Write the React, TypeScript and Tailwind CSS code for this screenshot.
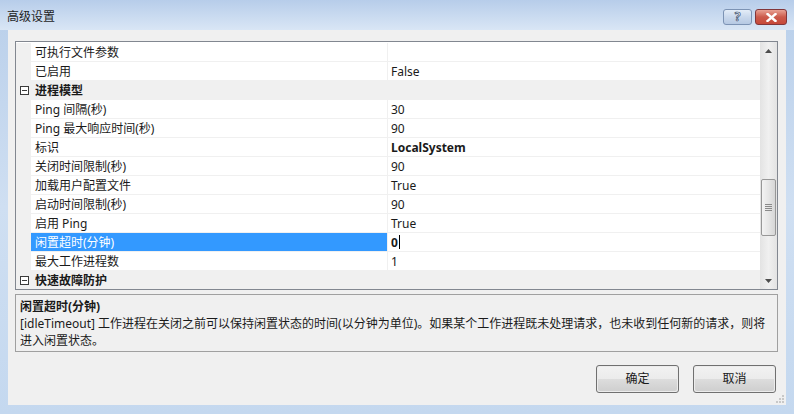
import React from 'react';

type Row =
    | { kind: 'prop'; name: string; value: string; bold?: boolean; selected?: boolean }
    | { kind: 'cat'; name: string };

const ROWS: Row[] = [
    { kind: 'prop', name: '可执行文件参数', value: '' },
    { kind: 'prop', name: '已启用', value: 'False' },
    { kind: 'cat', name: '进程模型' },
    { kind: 'prop', name: 'Ping 间隔(秒)', value: '30' },
    { kind: 'prop', name: 'Ping 最大响应时间(秒)', value: '90' },
    { kind: 'prop', name: '标识', value: 'LocalSystem', bold: true },
    { kind: 'prop', name: '关闭时间限制(秒)', value: '90' },
    { kind: 'prop', name: '加载用户配置文件', value: 'True' },
    { kind: 'prop', name: '启动时间限制(秒)', value: '90' },
    { kind: 'prop', name: '启用 Ping', value: 'True' },
    { kind: 'prop', name: '闲置超时(分钟)', value: '0', bold: true, selected: true },
    { kind: 'prop', name: '最大工作进程数', value: '1' },
    { kind: 'cat', name: '快速故障防护' },
];

function Collapse() {
    return (
        <span className="relative w-[9px] h-[9px] border border-[#3c3c3c] bg-white shrink-0">
            <span className="absolute left-[1px] right-[1px] top-[3px] h-[1px] bg-[#3c3c3c]" />
        </span>
    );
}

function GridRow({ row }: { row: Row }) {
    if (row.kind === 'cat') {
        return (
            <div className="flex items-center h-[19px] bg-[#f0f0f0] shrink-0">
                <div className="w-[15px] flex items-center justify-center pl-[2px]">
                    <Collapse />
                </div>
                <div className="pl-[4px] font-bold leading-[19px] text-[#1a1a1a]">{row.name}</div>
            </div>
        );
    }
    return (
        <div className="flex h-[19px] shrink-0">
            <div className="w-[15px] bg-[#f0f0f0]" />
            <div
                className={`w-[357px] pl-[4px] leading-[19px] border-b border-r border-[#f0f0f0] whitespace-nowrap ${
                    row.selected ? 'bg-[#3399ff] text-white' : 'text-[#1a1a1a]'
                }`}
            >
                {row.name}
            </div>
            <div className={`flex-1 flex items-center pl-[3px] leading-[19px] border-b border-[#f0f0f0] text-[#1a1a1a] ${row.bold ? 'font-bold' : ''}`}>
                {row.value}
                {row.selected && <span className="w-[1px] h-[14px] bg-black ml-[1px]" />}
            </div>
        </div>
    );
}

function ScrollBar() {
    return (
        <div className="w-[17px] flex flex-col bg-gradient-to-r from-[#e3e3e3] via-[#f0f0f0] to-[#e3e3e3]">
            <div className="h-[17px] flex items-center justify-center">
                <svg width="7" height="4" viewBox="0 0 7 4"><path d="M0 4 L3.5 0 L7 4 Z" fill="#4d4d4d" /></svg>
            </div>
            <div className="flex-1 relative">
                <div className="absolute left-[1px] right-[1px] top-[120px] h-[57px] rounded-[2px] border border-[#979797] bg-gradient-to-r from-[#f3f3f3] via-[#e6e6e6] to-[#d6d6d6] flex flex-col items-center justify-center gap-[1px]">
                    <span className="w-[7px] h-[1px] bg-[#8a8a8a]" />
                    <span className="w-[7px] h-[1px] bg-[#8a8a8a]" />
                    <span className="w-[7px] h-[1px] bg-[#8a8a8a]" />
                    <span className="w-[7px] h-[1px] bg-[#8a8a8a]" />
                </div>
            </div>
            <div className="h-[17px] flex items-center justify-center">
                <svg width="7" height="4" viewBox="0 0 7 4"><path d="M0 0 L3.5 4 L7 0 Z" fill="#4d4d4d" /></svg>
            </div>
        </div>
    );
}

function Button({ label }: { label: string }) {
    return (
        <div className="w-[83px] h-[28px] rounded-[3px] border border-[#707070] p-[1px] bg-[#ececec]">
            <div className="w-full h-full rounded-[2px] flex flex-col overflow-hidden relative">
                <div className="h-1/2 bg-gradient-to-b from-[#f2f2f2] to-[#ebebeb]" />
                <div className="h-1/2 bg-gradient-to-b from-[#dddddd] to-[#cfcfcf]" />
                <div className="absolute inset-0 flex items-center justify-center text-[#1a1a1a]">{label}</div>
            </div>
        </div>
    );
}

export default function App() {
    return (
        <div className="w-[794px] h-[414px] flex flex-col overflow-hidden bg-gradient-to-b from-[#b9cfea] via-[#cfdff2] to-[#c4d8ef] text-[12px] font-['Noto_Sans','Noto_Sans_CJK_SC',sans-serif]">
            {/* title bar */}
            <div className="h-[30px] shrink-0 flex items-start justify-between pl-[7px] pr-[7px] bg-gradient-to-b from-[#b7cdea] to-[#d9e6f5]">
                <div className="mt-[8px] text-[12px] text-[#1e1e1e] leading-[18px]">高级设置</div>
                <div className="flex gap-[3px] mt-[9px]">
                    <div className="w-[29px] h-[16px] rounded-[3px] border border-[#7c93b4] bg-gradient-to-b from-[#e4edf8] via-[#c9d8ec] to-[#b6c9e3] flex items-center justify-center">
                        <span className="text-[12px] font-bold leading-none text-[#eef3f9] [-webkit-text-stroke:0.7px_#3b4f6d]">?</span>
                    </div>
                    <div className="w-[32px] h-[16px] rounded-[3px] border border-[#82363a] bg-gradient-to-b from-[#e8a194] via-[#cb5a4b] to-[#c7493a] flex items-center justify-center">
                        <svg width="11" height="9" viewBox="0 0 11 9">
                            <path d="M1.5 1 L9.5 8 M9.5 1 L1.5 8" stroke="#ffffff" strokeWidth="2.4" strokeLinecap="square" />
                        </svg>
                    </div>
                </div>
            </div>

            {/* client */}
            <div className="flex-1 mx-[8px] mb-[9px] bg-[#f0f0f0] flex flex-col pl-[7px] pr-[8px] pt-[11px] relative">
                <div className="h-[249px] shrink-0 border border-[#828790] bg-white flex">
                    <div className="flex-1 flex flex-col overflow-hidden pt-[1px]">
                        {ROWS.map((r, i) => (
                            <GridRow key={i} row={r} />
                        ))}
                    </div>
                    <ScrollBar />
                </div>

                <div className="mt-[4px] h-[58px] shrink-0 border border-[#a0a0a0] bg-[#f0f0f0] pl-[4px] pt-[3px] text-[#1a1a1a] leading-[17px]">
                    <div className="font-bold">闲置超时(分钟)</div>
                    <div className="whitespace-nowrap">[idleTimeout] 工作进程在关闭之前可以保持闲置状态的时间(以分钟为单位)。如果某个工作进程既未处理请求，也未收到任何新的请求，则将</div>
                    <div className="whitespace-nowrap">进入闲置状态。</div>
                </div>

                <div className="mt-[13px] flex justify-end gap-[14px] pr-[2px]">
                    <Button label="确定" />
                    <Button label="取消" />
                </div>

                <div className="absolute right-[2px] bottom-[2px] grid grid-cols-3 gap-[1px]">
                    <span />
                    <span />
                    <span className="w-[2px] h-[2px] bg-[#c8c8c8]" />
                    <span />
                    <span className="w-[2px] h-[2px] bg-[#c8c8c8]" />
                    <span className="w-[2px] h-[2px] bg-[#c8c8c8]" />
                    <span className="w-[2px] h-[2px] bg-[#c8c8c8]" />
                    <span className="w-[2px] h-[2px] bg-[#c8c8c8]" />
                    <span className="w-[2px] h-[2px] bg-[#c8c8c8]" />
                </div>
            </div>
        </div>
    );
}
